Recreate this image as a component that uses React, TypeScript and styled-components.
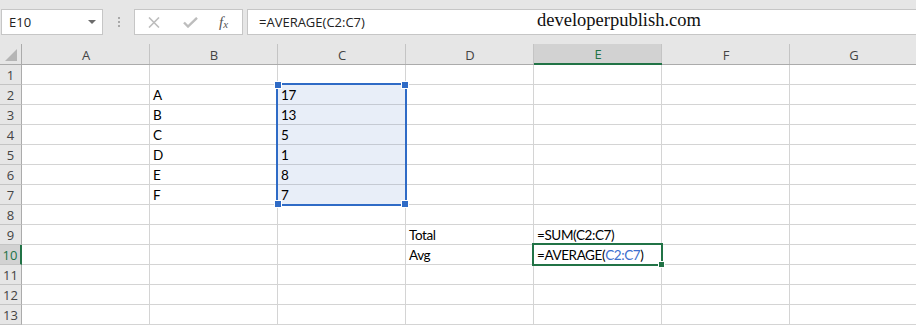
import React from "react";
import styled, { createGlobalStyle } from "styled-components";

const GlobalStyle = createGlobalStyle`
  html, body {
    margin: 0;
    padding: 0;
    background: #e6e6e6;
    overflow: hidden;
  }
`;

const COLUMNS = ["A", "B", "C", "D", "E", "F", "G"];
const ROW_COUNT = 13;
const ACTIVE = { col: "E", row: 10 };

const cells: Record<string, string> = {
  B2: "A",
  B3: "B",
  B4: "C",
  B5: "D",
  B6: "E",
  B7: "F",
  C2: "17",
  C3: "13",
  C4: "5",
  C5: "1",
  C6: "8",
  C7: "7",
  D9: "Total",
  E9: "=SUM(C2:C7)",
  D10: "Avg",
};

const isSelected = (col: string, row: number) =>
  col === "C" && row >= 2 && row <= 7;

const App = () => {
  return (
    <>
      <GlobalStyle />
      <Window>
        <Toolbar>
          <NameBox>
            <span>E10</span>
            <DropArrow />
          </NameBox>
          <Grip>
            <i />
            <i />
            <i />
          </Grip>
          <FxButtons>
            <IconSlot>
              <svg width="12" height="11" viewBox="0 0 12 11">
                <path d="M1 0.5 L11 10.5 M11 0.5 L1 10.5" stroke="#bdbdbd" strokeWidth="1.6" />
              </svg>
            </IconSlot>
            <IconSlot>
              <svg width="15" height="11" viewBox="0 0 15 11">
                <path d="M1 5.5 L5 9.5 L14 0.8" stroke="#bdbdbd" strokeWidth="2.4" fill="none" />
              </svg>
            </IconSlot>
            <FxLabel>
              f<sub>x</sub>
            </FxLabel>
          </FxButtons>
          <FormulaInput>
            =AVERAGE(C2:C7)
            <Watermark>developerpublish.com</Watermark>
          </FormulaInput>
        </Toolbar>

        <Sheet>
          <Corner>
            <svg width="12" height="12" viewBox="0 0 12 12">
              <polygon points="12,0 12,12 0,12" fill="#b5b5b5" />
            </svg>
          </Corner>
          {COLUMNS.map((c, ci) => (
            <ColHeader key={c} $col={ci} $active={c === ACTIVE.col}>
              {c}
            </ColHeader>
          ))}

          {Array.from({ length: ROW_COUNT }, (_, i) => i + 1).map((r) => (
            <React.Fragment key={r}>
              <RowHeader $row={r} $active={r === ACTIVE.row}>
                {r}
              </RowHeader>
              {COLUMNS.map((c, ci) => (
                <Cell
                  key={c + r}
                  $row={r}
                  $col={ci}
                  $selected={isSelected(c, r)}
                  $lastSelected={isSelected(c, r) && r === 7}
                >
                  {c === ACTIVE.col && r === ACTIVE.row ? (
                    <>
                      =AVERAGE(<Ref>C2:C7</Ref>)
                    </>
                  ) : (
                    cells[c + r]
                  )}
                </Cell>
              ))}
            </React.Fragment>
          ))}

          <Selection>
            <Handle $v="top" $h="left" />
            <Handle $v="top" $h="right" />
            <Handle $v="bottom" $h="left" />
            <Handle $v="bottom" $h="right" />
          </Selection>
          <ActiveCell>
            <FillHandle />
          </ActiveCell>
        </Sheet>
      </Window>
    </>
  );
};

const Window = styled.div`
  width: 916px;
  height: 325px;
  overflow: hidden;
  background: #e6e6e6;
`;

const Toolbar = styled.div`
  height: 44px;
  box-sizing: border-box;
  padding-top: 9px;
  display: flex;
  align-items: flex-start;
  font-family: "Open Sans", "Liberation Sans", sans-serif;
  font-size: 13px;
  color: #222;
`;

const NameBox = styled.div`
  margin-left: 1px;
  width: 102px;
  height: 26px;
  box-sizing: border-box;
  border: 1px solid #c6c6c6;
  background: #fff;
  display: flex;
  align-items: center;
  justify-content: space-between;
  padding: 0 6px 0 7px;
`;

const DropArrow = styled.div`
  width: 0;
  height: 0;
  border-left: 4px solid transparent;
  border-right: 4px solid transparent;
  border-top: 4px solid #6b6b6b;
`;

const Grip = styled.div`
  width: 31px;
  height: 26px;
  display: flex;
  flex-direction: column;
  align-items: center;
  justify-content: center;
  gap: 2px;

  i {
    display: block;
    width: 2px;
    height: 2px;
    background: #a8a8a8;
  }
`;

const FxButtons = styled.div`
  width: 109px;
  height: 26px;
  box-sizing: border-box;
  border: 1px solid #c6c6c6;
  background: #fff;
  display: flex;
  align-items: center;
  padding-left: 13px;
`;

const IconSlot = styled.div`
  width: 35px;
  display: flex;
  align-items: center;

  svg {
    display: block;
  }
`;

const FxLabel = styled.div`
  margin-left: 1px;
  font-family: "Liberation Serif", serif;
  font-style: italic;
  font-size: 15px;
  color: #555;

  sub {
    font-size: 11px;
    vertical-align: 0;
    position: relative;
    top: 1px;
  }
`;

const FormulaInput = styled.div`
  position: relative;
  flex: 1;
  margin-left: 4px;
  height: 26px;
  box-sizing: border-box;
  border: 1px solid #c6c6c6;
  border-right: none;
  background: #fff;
  padding-left: 11px;
  display: flex;
  align-items: center;
`;

const Watermark = styled.span`
  position: absolute;
  left: 289px;
  top: 0px;
  font-family: "Liberation Serif", serif;
  font-size: 18.5px;
  color: #111;
`;

const Sheet = styled.div`
  position: relative;
  display: grid;
  grid-template-columns: 22px repeat(7, 128px);
  grid-template-rows: 21px repeat(13, 20px);
  background: #fff;
  font-family: Lato, "Liberation Sans", sans-serif;
  font-size: 13.5px;
  letter-spacing: -0.4px;
  color: #000;
`;

const HeaderBase = styled.div`
  box-sizing: border-box;
  background: #e6e6e6;
  font-family: "Open Sans", "Liberation Sans", sans-serif;
  font-size: 13px;
  letter-spacing: 0;
  color: #444;
  display: flex;
  align-items: center;
`;

const Corner = styled(HeaderBase)`
  grid-row: 1;
  grid-column: 1;
  border-right: 1px solid #ababab;
  border-bottom: 1px solid #ababab;
  align-items: flex-end;
  justify-content: flex-end;
  padding: 0 4px 3px 0;
`;

const ColHeader = styled(HeaderBase)<{ $col: number; $active: boolean }>`
  grid-row: 1;
  grid-column: ${(p) => p.$col + 2};
  justify-content: center;
  padding-top: 1px;
  border-bottom: ${(p) => (p.$active ? "2px solid #217346" : "1px solid #ababab")};
  background: ${(p) => (p.$active ? "#d2d2d2" : "#e6e6e6")};
  color: ${(p) => (p.$active ? "#217346" : "#444")};
  box-shadow: inset -1px 0 0 #c4c4c4;
`;

const RowHeader = styled(HeaderBase)<{ $row: number; $active: boolean }>`
  grid-row: ${(p) => p.$row + 1};
  grid-column: 1;
  justify-content: center;
  padding-top: 1px;
  border-right: ${(p) => (p.$active ? "2px solid #217346" : "1px solid #ababab")};
  border-bottom: 1px solid #c4c4c4;
  background: ${(p) => (p.$active ? "#d2d2d2" : "#e6e6e6")};
  color: ${(p) => (p.$active ? "#217346" : "#444")};
`;

const Cell = styled.div<{
  $row: number;
  $col: number;
  $selected: boolean;
  $lastSelected: boolean;
}>`
  grid-row: ${(p) => p.$row + 1};
  grid-column: ${(p) => p.$col + 2};
  box-sizing: border-box;
  border-right: 1px solid #d4d4d4;
  border-bottom: 1px solid
    ${(p) => (p.$selected && !p.$lastSelected ? "#c5cad3" : "#d4d4d4")};
  background: ${(p) => (p.$selected ? "#e8eef8" : "#fff")};
  padding: 0 3px 0;
  display: flex;
  align-items: flex-end;
  white-space: nowrap;
  line-height: 18px;
`;

const Ref = styled.span`
  color: #3c6fce;
`;

const Selection = styled.div`
  position: relative;
  grid-column: 4;
  grid-row: 3 / span 6;
  margin: -2px -1px -1px -2px;
  border: 2px solid #2f6bc6;
  pointer-events: none;
`;

const Handle = styled.div<{ $v: "top" | "bottom"; $h: "left" | "right" }>`
  position: absolute;
  ${(p) => p.$v}: -4px;
  ${(p) => p.$h}: -4px;
  width: 6px;
  height: 6px;
  background: #2f6bc6;
  border: 1px solid #fff;
`;

const ActiveCell = styled.div`
  position: relative;
  grid-column: 6;
  grid-row: 11;
  margin: -2px -1px -1px -2px;
  border: 2px solid #217346;
  pointer-events: none;
`;

const FillHandle = styled.div`
  position: absolute;
  right: -4px;
  bottom: -4px;
  width: 5px;
  height: 5px;
  background: #217346;
  border: 1px solid #fff;
`;

export default App;
